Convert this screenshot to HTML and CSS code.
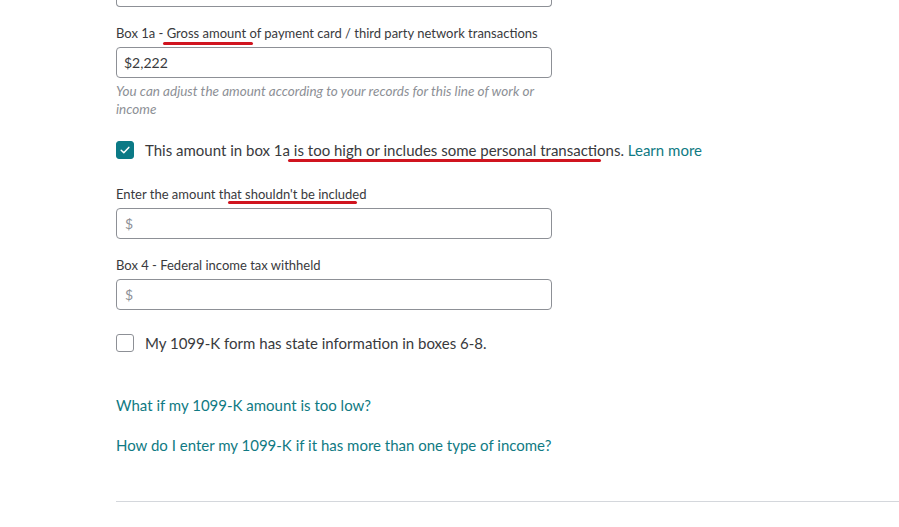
FILE: index.html
```html
<!DOCTYPE html>
<html lang="en">
<head>
<meta charset="utf-8">
<link rel="stylesheet" href="styles.css">
</head>
<body>
<div class="page">
  <div class="form">
    <div class="field-cut"></div>

    <div class="field first">
      <label class="label"><span class="mark-wrap">Box 1a - Gross amount of payment card / third party network transactions<span class="mark m1"></span></span></label>
      <div class="input"><span class="value">$2,222</span></div>
      <p class="helper">You can adjust the amount according to your records for this line of work or income</p>
    </div>

    <div class="check-row checked-row">
      <span class="box checked">
        <svg viewBox="0 0 18 18" width="18" height="18"><path d="M5.2 9.3 L7.8 11.8 L12.8 6.4" fill="none" stroke="#fff" stroke-width="1.5" stroke-linecap="round" stroke-linejoin="round"/></svg>
      </span>
      <span class="check-text mark-wrap">This amount in box 1a is too high or includes some personal transactions. <a class="link">Learn more</a><span class="mark m2"></span></span>
    </div>

    <div class="field sub">
      <label class="label mark-wrap">Enter the amount that shouldn't be included<span class="mark m3"></span></label>
      <div class="input"><span class="placeholder">$</span></div>
    </div>

    <div class="field box4">
      <label class="label">Box 4 - Federal income tax withheld</label>
      <div class="input"><span class="placeholder">$</span></div>
    </div>

    <div class="check-row state-row">
      <span class="box"></span>
      <span class="check-text">My 1099-K form has state information in boxes 6-8.</span>
    </div>

    <div class="links">
      <a class="link faq">What if my 1099-K amount is too low?</a>
      <a class="link faq">How do I enter my 1099-K if it has more than one type of income?</a>
    </div>
  </div>
  <hr class="divider">
</div>
</body>
</html>
```

FILE: styles.css
```css
* { box-sizing: border-box; }
html, body { margin: 0; padding: 0; background: #fff; }
body {
  font-family: Lato, "Noto Sans", "Liberation Sans", sans-serif;
  color: #393a3d;
}
.page { padding-left: 116px; }
.form { width: 436px; display: flex; flex-direction: column; }

.field-cut {
  height: 7px;
  border: 1px solid #8d9096;
  border-top: none;
  border-radius: 0 0 4px 4px;
}

.field { display: flex; flex-direction: column; }
.field.first { margin-top: 17px; }
.field.sub { margin-top: 25px; }
.field.box4 { margin-top: 17px; }

.label {
  font-size: 13px;
  line-height: 18px;
  color: #393a3d;
  display: block;
}
.mark-wrap { position: relative; }

.input {
  margin-top: 5px;
  height: 31px;
  border: 1px solid #8d9096;
  border-radius: 4px;
  padding: 0 7px;
  display: flex;
  align-items: center;
  font-size: 14px;
}
.value { color: #393a3d; }
.placeholder { color: #8d9096; padding-left: 1px; }

.helper {
  margin: 4px 0 0;
  font-size: 13.5px;
  line-height: 18px;
  font-style: italic;
  color: #8d9096;
}

.check-row {
  display: flex;
  align-items: center;
  gap: 11px;
  white-space: nowrap;
}
.checked-row { margin-top: 22px; }
.state-row { margin-top: 23px; }

.box {
  width: 18px;
  height: 18px;
  border: 1px solid #8d9096;
  border-radius: 3px;
  flex: none;
  display: flex;
}
.box.checked { background: #0b7a86; border-color: #0b7a86; }
.box.checked svg { margin: -1px; }

.check-text { font-size: 15px; line-height: 20px; color: #393a3d; }

.link { color: #107a83; text-decoration: none; }

.links { display: flex; flex-direction: column; margin-top: 42px; gap: 20px; }
.faq { font-size: 15px; line-height: 20px; white-space: nowrap; }

.divider {
  margin: 46px 0 0;
  border: none;
  border-top: 1px solid #d4d7dc;
  height: 0;
}

.mark {
  position: absolute;
  height: 3px;
  border-radius: 2px;
  background: #d0141f;
}
.m1 { left: 47px; width: 90px; top: 17px; }
.m2 { left: 143px; width: 313px; top: 19px; }
.m3 { left: 112px; width: 129px; top: 16px; }
```
